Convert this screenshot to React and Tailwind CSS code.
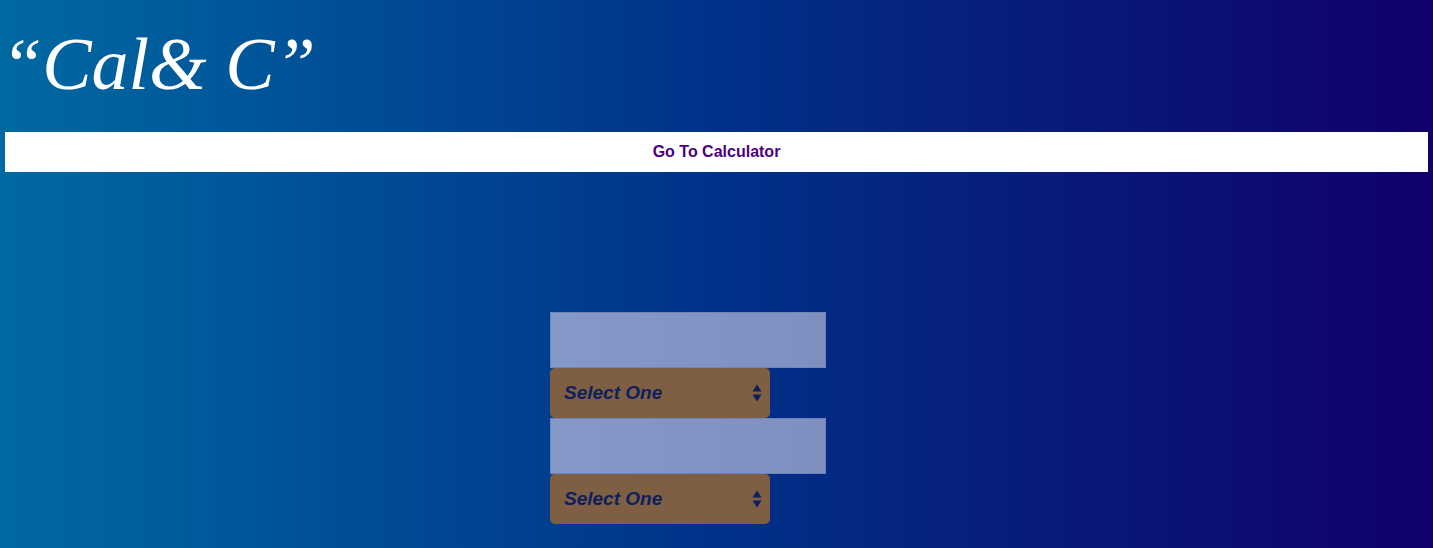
import React from "react";

function SelectBox() {
  return (
    <div className="relative w-[220px] h-[50px] rounded-[5px] bg-[#7f5f44] flex items-center pl-[14px]">
      <span className="text-[19px] font-bold italic text-[#0d1f5c]" style={{ fontFamily: '"Liberation Sans", Arial, sans-serif' }}>
        Select One
      </span>
      <svg className="absolute right-[8px] top-1/2 -translate-y-1/2" width="10" height="20" viewBox="0 0 10 20">
        <path d="M5 1.5 L9.5 8.5 L0.5 8.5 Z" fill="#0d1f5c" />
        <path d="M5 18.5 L9.5 11.5 L0.5 11.5 Z" fill="#0d1f5c" />
      </svg>
    </div>
  );
}

function InputBox() {
  return (
    <div className="w-[276px] h-[56px] bg-[linear-gradient(to_right,#8599c8,#7f8fc0)] border border-[#6f84b8]" />
  );
}

export default function App() {
  return (
    <div
      className="w-full h-[548px] overflow-hidden bg-[linear-gradient(to_right,#0069a1,#00328a_49%,#10006a)]"
      style={{ fontFamily: '"Liberation Sans", Arial, sans-serif' }}
    >
      <h1
        className="text-white italic text-[74px] leading-[76px] pl-[1px] pt-[26px] pb-[30px]"
        style={{ fontFamily: '"Liberation Serif", "Times New Roman", serif' }}
      >
        “Cal&amp; C”
      </h1>
      <div className="mx-[5px] h-[40px] bg-white flex items-center justify-center">
        <span className="text-[16px] font-bold text-[#4b0082]">Go To Calculator</span>
      </div>
      <div className="pl-[550px] pt-[140px] flex flex-col gap-0">
        <InputBox />
        <SelectBox />
        <InputBox />
        <SelectBox />
      </div>
    </div>
  );
}
